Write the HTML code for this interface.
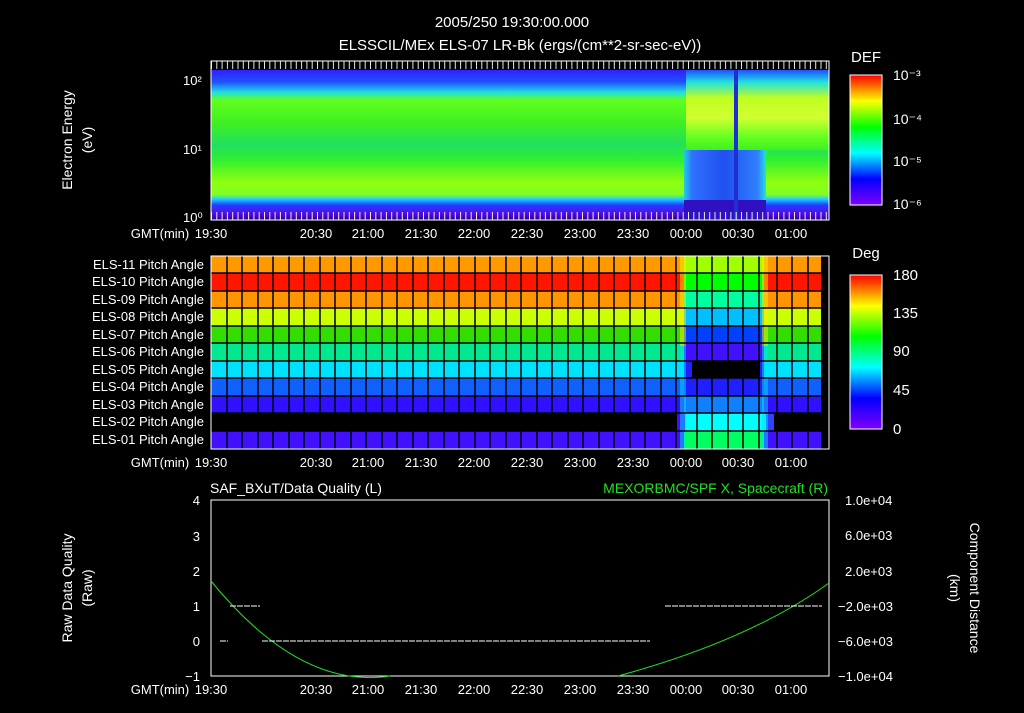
<!DOCTYPE html>
<html><head><meta charset="utf-8"><style>
body{margin:0;background:#000;width:1024px;height:708px;overflow:hidden}
svg text{font-family:"Liberation Sans",sans-serif;fill:#fff;font-size:13px}
</style></head><body>
<svg width="1024" height="708" xmlns="http://www.w3.org/2000/svg">
<defs>
<linearGradient id="spec" x1="0" y1="0" x2="0" y2="1">
<stop offset="0" stop-color="#3020ff"/><stop offset="0.08" stop-color="#2050ff"/>
<stop offset="0.15" stop-color="#20e0e0"/><stop offset="0.2" stop-color="#60ff20"/>
<stop offset="0.35" stop-color="#40f020"/><stop offset="0.5" stop-color="#20e060"/>
<stop offset="0.6" stop-color="#30f030"/><stop offset="0.75" stop-color="#90ff10"/>
<stop offset="0.83" stop-color="#80ff20"/><stop offset="0.86" stop-color="#20d0ff"/>
<stop offset="0.9" stop-color="#2040ff"/><stop offset="0.95" stop-color="#5010f0"/>
<stop offset="1" stop-color="#300090"/></linearGradient>
<linearGradient id="spec2" x1="0" y1="0" x2="0" y2="1">
<stop offset="0" stop-color="#2050ff"/><stop offset="0.15" stop-color="#20e0e0"/>
<stop offset="0.35" stop-color="#c0ff20"/><stop offset="0.6" stop-color="#d0ff30"/>
<stop offset="0.85" stop-color="#60ff20"/><stop offset="1" stop-color="#40f020"/></linearGradient>
<linearGradient id="blu" x1="0" y1="0" x2="1" y2="0">
<stop offset="0" stop-color="#20d0e0"/><stop offset="0.1" stop-color="#3070ff"/>
<stop offset="0.5" stop-color="#2050f0"/><stop offset="0.9" stop-color="#3080ff"/><stop offset="1" stop-color="#20e0e0"/></linearGradient>
<linearGradient id="cb" x1="0" y1="1" x2="0" y2="0">
<stop offset="0" stop-color="#8000ff"/><stop offset="0.2" stop-color="#0000ff"/>
<stop offset="0.4" stop-color="#00ffff"/><stop offset="0.6" stop-color="#00ff00"/>
<stop offset="0.8" stop-color="#ffff00"/><stop offset="1" stop-color="#ff0000"/></linearGradient>
</defs>
<text x="512" y="27" text-anchor="middle" style="font-size:15px">2005/250 19:30:00.000</text>
<text x="520" y="50" text-anchor="middle" style="font-size:15px">ELSSCIL/MEx ELS-07 LR-Bk  (ergs/(cm**2-sr-sec-eV))</text>
<!-- panel 1 -->
<rect x="211" y="70" width="618" height="150" fill="url(#spec)"/>
<rect x="686" y="70" width="143" height="80" fill="url(#spec2)"/>
<rect x="684" y="150" width="82" height="56" fill="url(#blu)"/>
<rect x="684" y="200" width="82" height="20" fill="#3010c0"/>
<rect x="734" y="70" width="4" height="150" fill="#2030d0"/>
<rect x="211" y="61" width="618" height="159" fill="none" stroke="#fff"/>
<path d="M211 65H829M211 216H829" stroke="#fff" stroke-width="8" stroke-dasharray="1 4.3" opacity="0.9"/>
<g style="font-size:12px"><text x="183" y="85">10²</text><text x="183" y="154">10¹</text><text x="183" y="222">10⁰</text></g>
<text transform="translate(72,140) rotate(-90)" text-anchor="middle" style="font-size:14px">Electron Energy</text>
<text transform="translate(92,140) rotate(-90)" text-anchor="middle" style="font-size:14px">(eV)</text>
<text x="866" y="62" text-anchor="middle" style="font-size:15px">DEF</text>
<rect x="850" y="75" width="32" height="130" fill="url(#cb)" stroke="#fff"/>
<text x="893" y="80" style="font-size:14px">10⁻³</text><text x="893" y="124" style="font-size:14px">10⁻⁴</text>
<text x="893" y="166" style="font-size:14px">10⁻⁵</text><text x="893" y="209" style="font-size:14px">10⁻⁶</text>
<g id="ax" style="font-size:13px">
<text x="160" y="238" text-anchor="middle">GMT(min)</text>
<text x="211" y="238" text-anchor="middle">19:30</text><text x="316" y="238" text-anchor="middle">20:30</text>
<text x="368" y="238" text-anchor="middle">21:00</text><text x="421" y="238" text-anchor="middle">21:30</text>
<text x="474" y="238" text-anchor="middle">22:00</text><text x="527" y="238" text-anchor="middle">22:30</text>
<text x="580" y="238" text-anchor="middle">23:00</text><text x="633" y="238" text-anchor="middle">23:30</text>
<text x="686" y="238" text-anchor="middle">00:00</text><text x="738" y="238" text-anchor="middle">00:30</text>
<text x="791" y="238" text-anchor="middle">01:00</text></g>
<!-- panel 2 -->
<g>
<rect x="211" y="256" width="610" height="17" fill="#ff9900"/>
<rect x="211" y="273" width="610" height="18" fill="#ff1500"/>
<rect x="211" y="291" width="610" height="17" fill="#ff9500"/>
<rect x="211" y="308" width="610" height="18" fill="#ccff00"/>
<rect x="211" y="326" width="610" height="17" fill="#33dd00"/>
<rect x="211" y="343" width="610" height="18" fill="#00e890"/>
<rect x="211" y="361" width="610" height="17" fill="#00e0ff"/>
<rect x="211" y="378" width="610" height="18" fill="#1060ff"/>
<rect x="211" y="396" width="610" height="17" fill="#3010ff"/>
<rect x="211" y="431" width="610" height="18" fill="#4010ff"/>
<rect x="684" y="256" width="80" height="17" fill="#a0ff00"/>
<rect x="684" y="273" width="80" height="18" fill="#00ff00"/>
<rect x="684" y="291" width="80" height="17" fill="#00ffa0"/>
<rect x="684" y="308" width="80" height="18" fill="#00c0ff"/>
<rect x="684" y="326" width="80" height="17" fill="#0040ff"/>
<rect x="684" y="343" width="80" height="18" fill="#4010ff"/>
<rect x="692" y="361" width="68" height="17" fill="#000"/>
<rect x="684" y="361" width="8" height="17" fill="#2020ff"/>
<rect x="760" y="361" width="4" height="17" fill="#2020ff"/>
<rect x="684" y="378" width="80" height="18" fill="#2020ff"/>
<rect x="684" y="396" width="80" height="17" fill="#1080ff"/>
<rect x="677" y="413" width="97" height="18" fill="#00ffff"/>
<rect x="677" y="413" width="8" height="18" fill="#4010ff"/>
<rect x="766" y="413" width="8" height="18" fill="#3040ff"/>
<rect x="684" y="431" width="80" height="18" fill="#00ff60"/>
<rect x="680" y="256" width="6" height="90" fill="#ffee00" opacity="0.5"/>
<rect x="762" y="256" width="6" height="90" fill="#ffee00" opacity="0.5"/>
<rect x="680" y="346" width="6" height="103" fill="#00e0ff" opacity="0.5"/>
<rect x="762" y="346" width="6" height="103" fill="#00e0ff" opacity="0.5"/>
</g>
<g stroke="#000" stroke-width="1.5">
<path d="M211 273H821M211 291H821M211 308H821M211 326H821M211 343H821M211 361H821M211 378H821M211 396H821M211 413H821M211 431H821"/>
<path d="M227 256V449M242 256V449M258 256V449M273 256V449M289 256V449M304 256V449M320 256V449M335 256V449M351 256V449M366 256V449M382 256V449M397 256V449M413 256V449M428 256V449M444 256V449M459 256V449M475 256V449M490 256V449M506 256V449M521 256V449M537 256V449M552 256V449M568 256V449M583 256V449M599 256V449M614 256V449M630 256V449M645 256V449M661 256V449M676 256V449M697 256V449M712 256V449M728 256V449M743 256V449M759 256V449M777 256V449M792 256V449M808 256V449"/>
</g>
<rect x="211" y="256" width="618" height="193" fill="none" stroke="#fff"/>
<g style="font-size:12px" text-anchor="end">
<text x="204" y="269">ELS-11 Pitch Angle</text><text x="204" y="286">ELS-10 Pitch Angle</text>
<text x="204" y="304">ELS-09 Pitch Angle</text><text x="204" y="321">ELS-08 Pitch Angle</text>
<text x="204" y="339">ELS-07 Pitch Angle</text><text x="204" y="356">ELS-06 Pitch Angle</text>
<text x="204" y="374">ELS-05 Pitch Angle</text><text x="204" y="391">ELS-04 Pitch Angle</text>
<text x="204" y="409">ELS-03 Pitch Angle</text><text x="204" y="426">ELS-02 Pitch Angle</text>
<text x="204" y="444">ELS-01 Pitch Angle</text></g>
<text x="866" y="258" text-anchor="middle" style="font-size:15px">Deg</text>
<rect x="850" y="275" width="32" height="154" fill="url(#cb)" stroke="#fff"/>
<text x="893" y="280" style="font-size:15px">180</text><text x="893" y="318" style="font-size:15px">135</text>
<text x="893" y="356" style="font-size:15px">90</text><text x="893" y="395" style="font-size:15px">45</text>
<text x="893" y="434" style="font-size:15px">0</text>
<use href="#ax" transform="translate(0,229)"/>
<!-- panel 3 -->
<text x="210" y="493" style="font-size:14px">SAF_BXuT/Data Quality (L)</text>
<text x="828" y="493" text-anchor="end" style="font-size:14px;fill:#20e020">MEXORBMC/SPF X, Spacecraft (R)</text>
<rect x="211" y="500" width="618" height="176" fill="none" stroke="#fff"/>
<g style="font-size:12px" text-anchor="end"><text x="200" y="505">4</text><text x="200" y="541">3</text><text x="200" y="576">2</text><text x="200" y="611">1</text><text x="200" y="646">0</text><text x="200" y="681">−1</text></g>
<g style="font-size:12px"><text x="845" y="505">1.0e+04</text><text x="845" y="540">6.0e+03</text><text x="845" y="576">2.0e+03</text><text x="838" y="611">−2.0e+03</text><text x="838" y="646">−6.0e+03</text><text x="838" y="681">−1.0e+04</text></g>
<text transform="translate(72,588) rotate(-90)" text-anchor="middle" style="font-size:14px">Raw Data Quality</text>
<text transform="translate(92,588) rotate(-90)" text-anchor="middle" style="font-size:14px">(Raw)</text>
<text transform="translate(970,588) rotate(90)" text-anchor="middle" style="font-size:14px">Component Distance</text>
<text transform="translate(950,588) rotate(90)" text-anchor="middle" style="font-size:14px">(km)</text>
<path d="M211 581Q300 690 390 676M618 676Q750 640 829 583" fill="none" stroke="#20e020"/>
<path d="M230 606H260M262 641H650M665 606H822M220 641H228" stroke="#fff" stroke-dasharray="6 1"/>
<use href="#ax" transform="translate(0,456)"/>
</svg>
</body></html>
